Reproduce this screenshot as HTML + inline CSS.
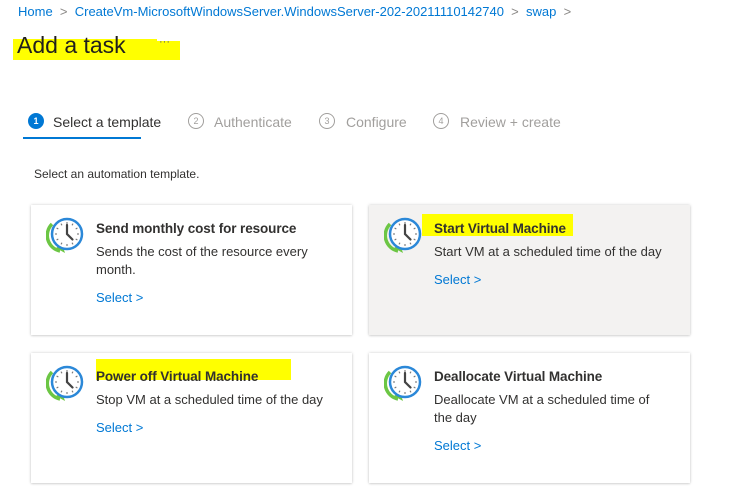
<!DOCTYPE html>
<html><head><meta charset="utf-8"><style>
body{margin:0;width:748px;height:498px;background:#fff;font-family:"Liberation Sans",sans-serif;position:relative;overflow:hidden;color:#323130}
.a{position:absolute;white-space:nowrap}
.bc{font-size:13px;color:#0078d4}
.card{position:absolute;width:321px;height:130px;background:#fff;box-shadow:0 0 3px rgba(0,0,0,.18),0 1px 2px rgba(0,0,0,.1)}
.t{font-size:13.5px;font-weight:bold;color:#323130;letter-spacing:-0.1px}
.d{font-size:13px;color:#323130;line-height:18px}
.s{font-size:13px;color:#0078d4}
.hl{position:absolute;background:#ffff00}
.st{font-size:14px;color:#a19f9d}
.num{position:absolute;width:14px;height:14px;border:1px solid #a19f9d;border-radius:50%;font-size:9px;color:#a19f9d;text-align:center;line-height:14px}
.sep{color:#8a8886}
</style></head><body>
<div class="a bc" style="left:18px;top:4px">Home <span class="sep">&nbsp;&gt;&nbsp;</span> CreateVm-MicrosoftWindowsServer.WindowsServer-202-20211110142740 <span class="sep">&nbsp;&gt;&nbsp;</span> swap <span class="sep">&nbsp;&gt;</span></div>
<div class="hl" style="left:13px;top:39px;width:144px;height:21px"></div>
<div class="hl" style="left:155px;top:41px;width:25px;height:19px"></div>
<div class="a" style="left:17px;top:32px;font-size:23px;color:#201f1e">Add a task</div>
<div class="a" style="left:159px;top:36px;font-size:11px;color:#605e5c">···</div>

<div class="num" style="left:28px;top:113px;background:#0078d4;border-color:#0078d4;color:#fff;font-weight:bold">1</div>
<div class="a" style="left:53px;top:114px;font-size:14px;color:#323130">Select a template</div>
<div style="position:absolute;left:23px;top:137px;width:118px;height:2px;background:#0078d4"></div>
<div class="num" style="left:188px;top:113px">2</div>
<div class="a st" style="left:214px;top:114px">Authenticate</div>
<div class="num" style="left:319px;top:113px">3</div>
<div class="a st" style="left:346px;top:114px">Configure</div>
<div class="num" style="left:433px;top:113px">4</div>
<div class="a st" style="left:460px;top:114px">Review + create</div>

<div class="a" style="left:34px;top:167px;font-size:12px;color:#323130">Select an automation template.</div>

<svg width="0" height="0" style="position:absolute"><defs><g id="clk">
<path d="M6 10 A16 16 0 0 0 14 37" fill="none" stroke="#6cc644" stroke-width="3.5"/>
<path d="M10 34 L19 39 L16 30 Z" fill="#6cc644"/>
<circle cx="21" cy="20" r="15" fill="#fff" stroke="#2b88d8" stroke-width="2.5"/>
<g stroke="#777" stroke-width="1.1"><line x1="21" y1="8" x2="21" y2="10"/><line x1="21" y1="30" x2="21" y2="32"/><line x1="9" y1="20" x2="11" y2="20"/><line x1="31" y1="20" x2="33" y2="20"/><line x1="27" y1="9.6" x2="26" y2="11.3"/><line x1="15" y1="9.6" x2="16" y2="11.3"/><line x1="27" y1="30.4" x2="26" y2="28.7"/><line x1="15" y1="30.4" x2="16" y2="28.7"/><line x1="31.4" y1="14" x2="29.7" y2="15"/><line x1="10.6" y1="14" x2="12.3" y2="15"/><line x1="31.4" y1="26" x2="29.7" y2="25"/><line x1="10.6" y1="26" x2="12.3" y2="25"/></g>
<path d="M21 11 L21 20 L26.5 25.5" fill="none" stroke="#444" stroke-width="2.2" stroke-linecap="round"/>
</g></defs></svg>

<div class="card" style="left:31px;top:205px"></div>
<svg class="a" style="left:46px;top:214px" width="42" height="42"><use href="#clk"/></svg>
<div class="a t" style="left:96px;top:221px">Send monthly cost for resource</div>
<div class="a d" style="left:96px;top:243px">Sends the cost of the resource every<br>month.</div>
<div class="a s" style="left:96px;top:290px">Select &gt;</div>

<div class="card" style="left:369px;top:205px;background:#f3f2f1"></div>
<div class="hl" style="left:422px;top:214px;width:151px;height:22px"></div>
<svg class="a" style="left:384px;top:214px" width="42" height="42"><use href="#clk"/></svg>
<div class="a t" style="left:434px;top:221px">Start Virtual Machine</div>
<div class="a d" style="left:434px;top:243px">Start VM at a scheduled time of the day</div>
<div class="a s" style="left:434px;top:272px">Select &gt;</div>

<div class="card" style="left:31px;top:353px"></div>
<div class="hl" style="left:96px;top:359px;width:195px;height:21px"></div>
<svg class="a" style="left:46px;top:362px" width="42" height="42"><use href="#clk"/></svg>
<div class="a t" style="left:96px;top:369px">Power off Virtual Machine</div>
<div class="a d" style="left:96px;top:391px">Stop VM at a scheduled time of the day</div>
<div class="a s" style="left:96px;top:420px">Select &gt;</div>

<div class="card" style="left:369px;top:353px"></div>
<svg class="a" style="left:384px;top:362px" width="42" height="42"><use href="#clk"/></svg>
<div class="a t" style="left:434px;top:369px">Deallocate Virtual Machine</div>
<div class="a d" style="left:434px;top:391px">Deallocate VM at a scheduled time of<br>the day</div>
<div class="a s" style="left:434px;top:438px">Select &gt;</div>
</body></html>
